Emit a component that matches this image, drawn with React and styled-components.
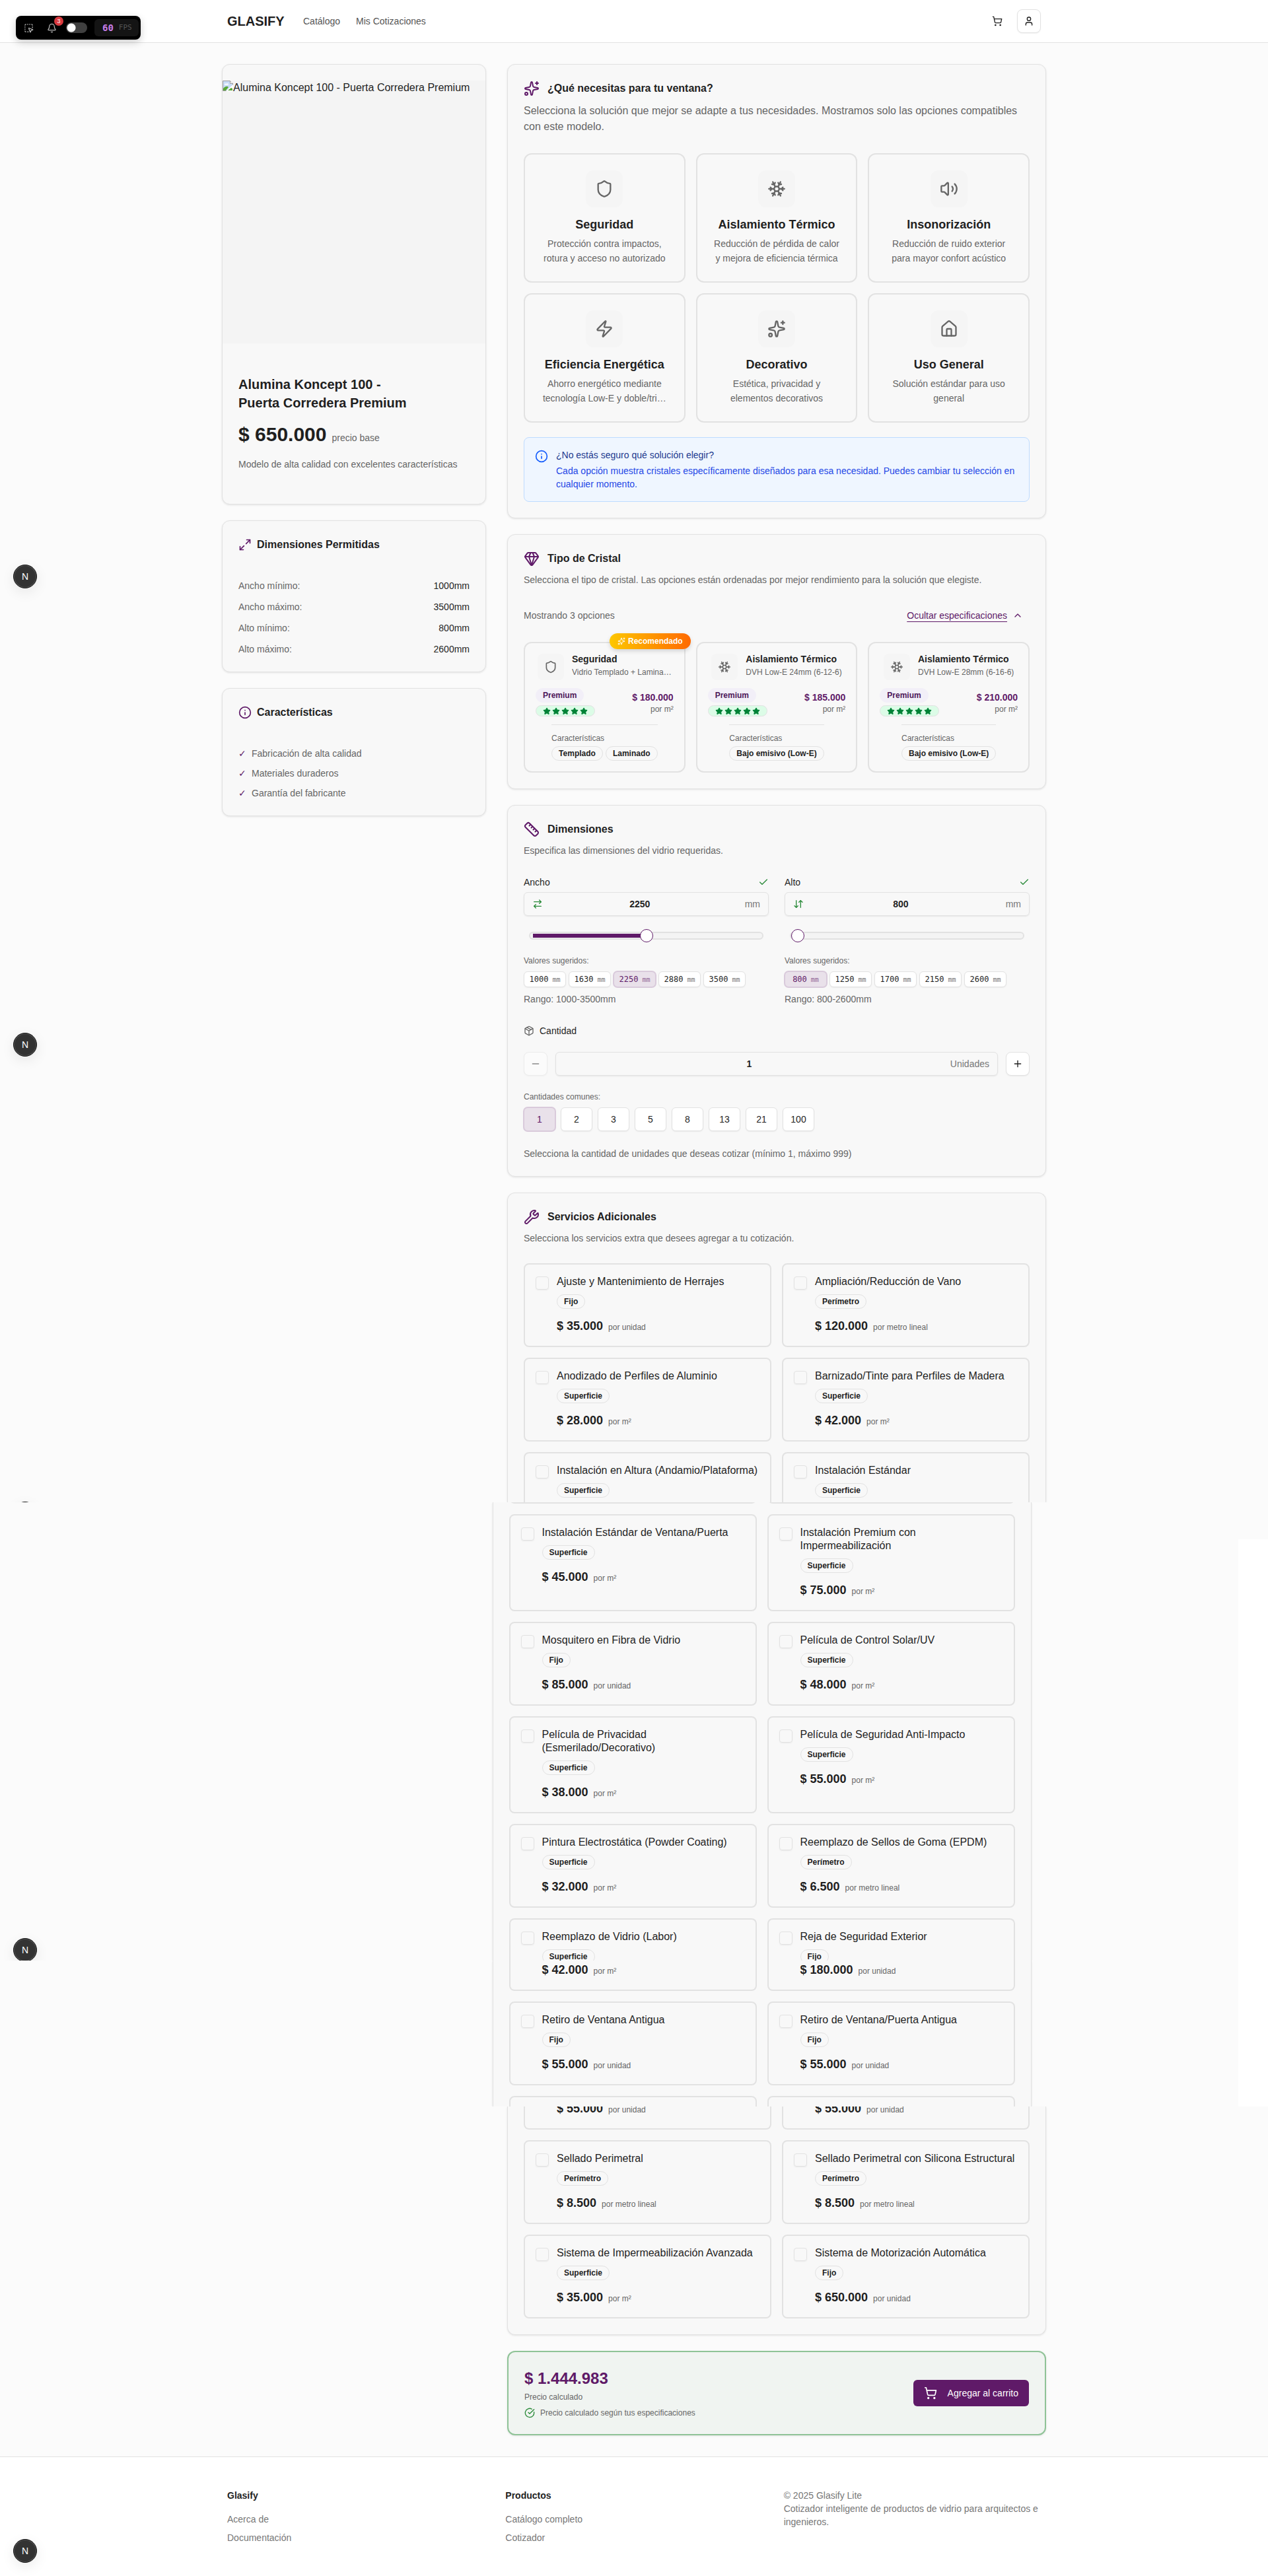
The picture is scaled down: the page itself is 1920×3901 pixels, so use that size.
import React from "react";
import styled, { createGlobalStyle, css } from "styled-components";
import {
  ArrowDownUp, ArrowRightLeft, Bell, Check, ChevronUp, CircleCheckBig, Gem, House, Info,
  Maximize2, Minus, Package, Plus, Ruler, Shield, ShoppingCart, Snowflake, Sparkles,
  SquareDashedMousePointer, Star, User, Volume2, Wrench, Zap,
} from "lucide-react";

const c = {
  page: "#fbfbfb",
  card: "#f8f8f8",
  soft: "#f4f4f4",
  line: "#e2e2e2",
  text: "#1f1f1f",
  muted: "#666666",
  purple: "#5f1a68",
  green: "#2a8a39",
};

const Global = createGlobalStyle`
  *, *::before, *::after { box-sizing: border-box; }
  body {
    margin: 0;
    background: ${c.page};
    color: ${c.text};
    font-family: "Liberation Sans", Arial, sans-serif;
    font-size: 14px;
    line-height: 20px;
  }
  h1, h2, h3, p, ul, dl, dd, fieldset { margin: 0; padding: 0; border: 0; }
  ul { list-style: none; }
  a { color: inherit; text-decoration: none; }
  button, input { font: inherit; color: inherit; }
  svg { display: block; flex: none; }
`;

/* ---------- page shell ---------- */

const Band = styled.section`
  position: relative;
  overflow: hidden;
  background: ${c.page};
`;

const NarrowBand = styled(Band)`
  background: ${(p) => (p.$lead ? `linear-gradient(${c.page} 56px, #ffffff 56px)` : "#ffffff")};
`;

const NarrowInner = styled.div`
  position: relative;
  overflow: hidden;
  margin-right: 45px;
  background: ${c.page};
`;

const Container = styled.div`
  max-width: 1280px;
  margin: 0 auto;
  padding: 0 ${(p) => p.$pad || 16}px;
`;

const Columns = styled.div`
  display: grid;
  grid-template-columns: 400px minmax(0, 1fr);
  gap: 32px;
  padding-top: ${(p) => (p.$top ? 32 : 0)}px;
`;

const Stack = styled.div`
  display: flex;
  flex-direction: column;
  gap: ${(p) => p.$gap || 24}px;
  grid-column: ${(p) => p.$col || "auto"};
  min-width: 0;
`;

const Header = styled.header`
  background: #ffffff;
  border-bottom: 1px solid ${c.line};
`;

const Bar = styled.div`
  display: flex;
  align-items: center;
  height: 64px;
`;

const Brand = styled.a`
  width: 115px;
  font-size: 20px;
  line-height: 28px;
  font-weight: 700;
`;

const Nav = styled.nav`
  display: flex;
  gap: 24px;
  flex: 1;
  color: #555555;
`;

const IconButton = styled.button`
  display: grid;
  place-items: center;
  width: 36px;
  height: 36px;
  margin-left: 12px;
  padding: 0;
  border: 1px solid ${(p) => (p.$outline ? c.line : "transparent")};
  border-radius: 8px;
  background: ${(p) => (p.$outline ? "#ffffff" : "transparent")};
  box-shadow: ${(p) => (p.$outline ? "0 1px 2px rgba(0, 0, 0, 0.06)" : "none")};
  opacity: ${(p) => (p.disabled ? 0.5 : 1)};
`;

/* ---------- floating tools ---------- */

const DevBar = styled.aside`
  position: absolute;
  top: 24px;
  left: 24px;
  z-index: 2;
  display: flex;
  align-items: center;
  height: 36px;
  padding: 0 3px 0 12px;
  border-radius: 8px;
  background: #000000;
  color: #b4b4b4;
  box-shadow: 0 4px 12px rgba(0, 0, 0, 0.2);
`;

const DevButton = styled.button`
  position: relative;
  display: block;
  margin-right: 20px;
  padding: 0;
  border: 0;
  background: none;
`;

const Count = styled.span`
  position: absolute;
  top: -10px;
  left: 11px;
  width: 14px;
  height: 14px;
  border-radius: 50%;
  background: #d93a3f;
  color: #ffffff;
  font-size: 9px;
  line-height: 14px;
  text-align: center;
`;

const Toggle = styled.input`
  appearance: none;
  width: 32px;
  height: 16px;
  margin: 0 11px 0 -6px;
  border-radius: 8px;
  background: radial-gradient(circle at 8px 8px, #ffffff 6px, #404040 7px);
`;

const Fps = styled.span`
  display: flex;
  align-items: center;
  gap: 8px;
  height: 26px;
  padding: 0 10px 0 12px;
  border-radius: 6px;
  background: #141414;
  color: #555555;
  font-family: "DejaVu Sans Mono", monospace;
  font-size: 11px;
  b { color: #c77de8; font-size: 14px; }
`;

const NBadge = styled.button`
  position: absolute;
  left: 20px;
  ${(p) => (p.$bottom !== undefined ? `bottom: ${p.$bottom}px;` : `top: ${p.$top}px;`)}
  width: 36px;
  height: 36px;
  padding: 0;
  border: 1px solid #111111;
  border-radius: 50%;
  background: #333333;
  color: #ffffff;
  font-size: 14px;
  line-height: 34px;
  text-align: center;
  box-shadow: inset 0 0 0 1px #555555, 0 6px 20px rgba(0, 0, 0, 0.08);
`;

const NextBadge = (props) => <NBadge type="button" {...props}>N</NBadge>;

/* ---------- cards ---------- */

const Card = styled.article`
  padding: 24px;
  border: 1px solid ${c.line};
  border-radius: 12px;
  background: ${c.card};
  box-shadow: 0 1px 3px rgba(0, 0, 0, 0.1);
`;

const CardPart = styled(Card)`
  ${(p) => !p.$first && css`
    padding-top: 0;
    border-top: 0;
    border-top-left-radius: 0;
    border-top-right-radius: 0;
  `}
  ${(p) => !p.$last && css`
    padding-bottom: 0;
    border-bottom: 0;
    border-bottom-left-radius: 0;
    border-bottom-right-radius: 0;
  `}
`;

const CardTitle = styled.h2`
  display: flex;
  align-items: center;
  gap: ${(p) => p.$gap || 12}px;
  font-size: 16px;
  line-height: 24px;
  svg { color: ${c.purple}; }
`;

const CardText = styled.p`
  margin-top: 10px;
  color: ${c.muted};
  font-size: ${(p) => (p.$large ? 16 : 14)}px;
  line-height: ${(p) => (p.$large ? 24 : 20)}px;
`;

const CardBody = styled.div`
  margin-top: ${(p) => p.$gap || 28}px;
`;

function CardHead({ icon: Icon, title, text, large }) {
  return (
    <header>
      <CardTitle><Icon size={24} />{title}</CardTitle>
      <CardText $large={large}>{text}</CardText>
    </header>
  );
}

/* ---------- product column ---------- */

const ProductCard = styled(Card)`
  padding: 24px 0;
`;

const Photo = styled.div`
  display: flex;
  align-items: flex-start;
  aspect-ratio: 1;
  background: ${c.soft};
  font-size: 16px;
  line-height: 22px;
  white-space: nowrap;
`;

const ProductInfo = styled.div`
  display: flex;
  flex-direction: column;
  gap: 16px;
  padding: 48px 24px 24px;
`;

const ProductName = styled.h1`
  max-width: 280px;
  font-size: 20px;
  line-height: 28px;
`;

const ProductPrice = styled.p`
  display: flex;
  align-items: baseline;
  gap: 8px;
  color: ${c.muted};
  line-height: 20px;
  strong { color: ${c.text}; font-size: 30px; line-height: 36px; }
`;

const Lead = styled.p`
  color: ${c.muted};
  line-height: 23px;
`;

const Specs = styled.dl`
  display: flex;
  flex-direction: column;
  gap: 12px;
  margin-top: 40px;
  div { display: flex; justify-content: space-between; }
  dt { color: ${c.muted}; }
`;

const Features = styled.ul`
  display: flex;
  flex-direction: column;
  gap: 10px;
  margin-top: 40px;
  color: ${c.muted};
  li { display: flex; gap: 8px; }
  span { width: 12px; color: ${c.purple}; }
`;

function BrokenImage() {
  return (
    <svg width="16" height="16" viewBox="0 0 16 16" aria-hidden="true">
      <path d="M.5.5h11l4 4v11H.5z" fill="#c9dcf7" stroke="#9a9a9a" />
      <path d="M11.5.5v4h4" fill="#fff" stroke="#9a9a9a" />
      <path d="M3 6.5a1.5 1.5 0 0 1 2.500-1.500A2 2 0 0 1 9 6.500z" fill="#fff" />
      <path d="M1 15v-3c3-3.500 6-4 8-2l-4 5z" fill="#5aa83a" />
      <path d="M5 16 16 6v10z" fill="#fff" />
      <path d="M8 15l5-4 2 1v3z" fill="#5aa83a" />
    </svg>
  );
}

/* ---------- solutions ---------- */

const Grid = styled.div`
  display: grid;
  grid-template-columns: repeat(${(p) => p.$cols}, minmax(0, 1fr));
  gap: 16px;
  ${(p) => p.$clip && css`
    height: ${p.$clip}px;
    overflow: hidden;
    align-content: ${p.$end ? "end" : "start"};
  `}
`;

const Solution = styled.button`
  display: flex;
  flex-direction: column;
  align-items: center;
  padding: 24px;
  border: 2px solid ${c.line};
  border-radius: 12px;
  background: transparent;
  text-align: center;
  strong { margin-top: 12px; font-size: 18px; line-height: 28px; white-space: nowrap; }
`;

const SolutionText = styled.span`
  margin-top: 4px;
  color: ${c.muted};
  font-size: 14px;
  line-height: 22px;
`;

const IconBox = styled.span`
  display: grid;
  place-items: center;
  flex: none;
  width: ${(p) => p.$size}px;
  height: ${(p) => p.$size}px;
  border-radius: ${(p) => (p.$size > 40 ? 12 : 8)}px;
  background: #f5f5f5;
  color: ${c.muted};
`;

const Notice = styled.div`
  display: flex;
  gap: 12px;
  margin-top: 22px;
  padding: 16px;
  border: 1px solid #bedbff;
  border-radius: 8px;
  background: #eff6ff;
  color: #1f47e6;
  svg { margin-top: 2px; color: #155dfc; }
  h3 { margin-bottom: 4px; color: #1c398e; font-size: 14px; font-weight: 400; }
`;

/* ---------- glass ---------- */

const Row = styled.div`
  display: flex;
  align-items: center;
  justify-content: ${(p) => (p.$between ? "space-between" : "flex-start")};
  gap: ${(p) => p.$gap || 0}px;
  color: ${(p) => (p.$muted ? c.muted : "inherit")};
`;

const LinkButton = styled.button`
  display: flex;
  align-items: center;
  gap: 8px;
  height: 32px;
  margin-bottom: 24px;
  padding: 0 10px;
  border: 0;
  background: none;
  color: ${c.purple};
  span { text-decoration: underline; text-underline-offset: 4px; }
`;

const Options = styled(Row)`
  > span { margin-bottom: 24px; }
`;

const Glass = styled.button`
  position: relative;
  display: flex;
  flex-direction: column;
  align-items: center;
  gap: 12px;
  padding: 16px;
  border: 2px solid ${c.line};
  border-radius: 12px;
  background: transparent;
  text-align: left;
`;

const GlassHead = styled.span`
  display: flex;
  gap: 12px;
  max-width: 100%;
`;

const GlassName = styled.span`
  display: flex;
  flex-direction: column;
  gap: 4px;
  min-width: 0;
  strong { line-height: 16px; }
`;

const Small = styled.span`
  color: ${c.muted};
  font-size: 12px;
  line-height: 16px;
  overflow: hidden;
  text-overflow: ellipsis;
  white-space: nowrap;
`;

const GlassMeta = styled.span`
  display: flex;
  align-items: center;
  justify-content: space-between;
  width: 100%;
`;

const GlassTags = styled.span`
  display: flex;
  flex-direction: column;
  align-items: flex-start;
  gap: 4px;
`;

const Pill = styled.span`
  display: inline-flex;
  align-items: center;
  gap: 2px;
  height: ${(p) => (p.$tone === "green" ? 17 : 22)}px;
  padding: 0 10px;
  border: 1px solid ${(p) => (p.$tone === "violet" ? "#f2eff8" : c.line)};
  border-radius: 11px;
  background: ${(p) => ({ violet: "#f2eff8", green: "#dcfce7" })[p.$tone] || "transparent"};
  color: ${(p) => ({ violet: "#4d1759", green: "#008236" })[p.$tone] || c.text};
  font-size: 12px;
  line-height: 16px;
  font-weight: 700;
`;

const GlassPrice = styled.span`
  display: flex;
  flex-direction: column;
  align-items: flex-end;
  strong { color: ${c.purple}; }
`;

const GlassSpecs = styled.span`
  display: flex;
  flex-direction: column;
  gap: 4px;
  padding-top: 12px;
  border-top: 1px solid ${c.line};
`;

const Ribbon = styled.span`
  position: absolute;
  top: -15px;
  right: -10px;
  display: flex;
  align-items: center;
  gap: 4px;
  height: 24px;
  padding: 0 12px;
  border-radius: 12px;
  background: linear-gradient(90deg, #fdc700, #ff6900);
  color: #ffffff;
  font-size: 12px;
  font-weight: 700;
  box-shadow: 0 3px 6px rgba(0, 0, 0, 0.15);
`;

/* ---------- dimensions ---------- */

const FieldLabel = styled.label`
  display: flex;
  align-items: center;
  justify-content: ${(p) => (p.$plain ? "flex-start" : "space-between")};
  gap: 8px;
  color: ${c.text};
  svg { color: ${(p) => (p.$plain ? c.muted : c.green)}; }
`;

const InputBox = styled.div`
  display: flex;
  align-items: center;
  flex: 1;
  height: 36px;
  margin-top: ${(p) => (p.$top ? 5 : 0)}px;
  padding: 0 12px 0 ${(p) => (p.$top ? 12 : 0)}px;
  border: 1px solid ${c.line};
  border-radius: 6px;
  box-shadow: 0 1px 2px rgba(0, 0, 0, 0.08);
  color: #777777;
  svg { color: ${c.green}; }
`;

const NumberInput = styled.input`
  flex: 1;
  min-width: 0;
  margin-right: 12px;
  padding: 0;
  border: 0;
  outline: 0;
  background: transparent;
  color: ${c.text};
  font-weight: 700;
  text-align: center;
`;

const Slider = styled.input`
  appearance: none;
  display: block;
  width: calc(100% - 16px);
  height: 20px;
  margin: 20px 8px;
  background: transparent;
  &::-webkit-slider-runnable-track {
    height: 12px;
    border: 2px solid ${c.line};
    border-radius: 6px;
    background: linear-gradient(${c.purple}, ${c.purple}) 4px center / ${(p) => p.$fill}% 6px no-repeat, ${c.soft};
  }
  &::-webkit-slider-thumb {
    appearance: none;
    width: 20px;
    height: 20px;
    margin-top: -6px;
    border: 1px solid ${c.purple};
    border-radius: 50%;
    background: #ffffff;
  }
`;

const Caption = styled.p`
  color: ${c.muted};
  font-size: 12px;
  line-height: 16px;
`;

const Chips = styled.div`
  display: flex;
  flex-wrap: wrap;
  gap: ${(p) => p.$gap}px;
  margin: 8px 0;
`;

const active = css`
  border-color: #d9cadb;
  background: #e9e1ea;
  color: ${c.purple};
  box-shadow: 0 0 0 1px #d9cadb;
`;

const Chip = styled.button`
  display: flex;
  align-items: baseline;
  justify-content: center;
  gap: 6px;
  min-width: 64px;
  height: 24px;
  padding: 3px 7px;
  border: 1px solid ${c.line};
  border-radius: 6px;
  background: #ffffff;
  box-shadow: 0 1px 2px rgba(0, 0, 0, 0.06);
  font-family: "DejaVu Sans Mono", monospace;
  font-size: 12px;
  line-height: 16px;
  small { font-size: 10px; opacity: 0.65; }
  ${(p) => p.$on && active}
`;

const QtyChip = styled.button`
  width: 48px;
  height: 36px;
  padding: 0;
  border: 1px solid ${c.line};
  border-radius: 6px;
  background: #ffffff;
  box-shadow: 0 1px 2px rgba(0, 0, 0, 0.06);
  ${(p) => p.$on && active}
`;

const QtyRow = styled.div`
  display: flex;
  gap: 12px;
  margin: 22px 0 24px;
  button { margin: 0; }
`;

const PairGrid = styled.div`
  display: grid;
  grid-template-columns: 1fr 1fr;
  gap: 24px;
  margin-bottom: 28px;
`;

/* ---------- services ---------- */

const Tile = styled.div`
  display: flex;
  gap: 12px;
  padding: 16px;
  border: 2px solid ${c.line};
  border-radius: 8px;
  ${(p) => p.$open === "top" && css`
    padding-top: 0;
    padding-left: 48px;
    border-top: 0;
    border-top-left-radius: 0;
    border-top-right-radius: 0;
  `}
  ${(p) => p.$open === "bottom" && css`
    padding-bottom: 7px;
    border-bottom: 0;
    border-bottom-left-radius: 0;
    border-bottom-right-radius: 0;
  `}
`;

const TickBox = styled.input`
  appearance: none;
  flex: none;
  width: 20px;
  height: 20px;
  margin: 2px 0 0;
  border: 1px solid ${c.line};
  border-radius: 4px;
  box-shadow: 0 1px 2px rgba(0, 0, 0, 0.06);
`;

const ServiceInfo = styled.div`
  display: flex;
  flex-direction: column;
  align-items: flex-start;
  label { margin-bottom: 9px; font-size: 16px; line-height: 20px; }
`;

const ServicePrice = styled.p`
  display: flex;
  align-items: baseline;
  gap: 8px;
  margin-top: ${(p) => (p.$flush ? 0 : 12)}px;
  strong { font-size: 18px; line-height: 28px; }
  span { color: ${c.muted}; font-size: 12px; line-height: 16px; }
`;

function Price({ value, unit, flush }) {
  return (
    <ServicePrice $flush={flush}>
      <strong>$ {value}</strong>
      <span>{unit}</span>
    </ServicePrice>
  );
}

function Service({ name, kind, value, unit, open }) {
  const id = React.useId();
  return (
    <Tile $open={open}>
      <TickBox type="checkbox" id={id} />
      <ServiceInfo>
        <label htmlFor={id}>{name}</label>
        <Pill>{kind}</Pill>
        {value && <Price value={value} unit={unit} />}
      </ServiceInfo>
    </Tile>
  );
}

const UN = "por unidad";
const M2 = "por m²";
const ML = "por metro lineal";

const toService = ([name, kind, value, unit]) => ({ name, kind, value, unit });

const firstServices = [
  ["Ajuste y Mantenimiento de Herrajes", "Fijo", "35.000", UN],
  ["Ampliación/Reducción de Vano", "Perímetro", "120.000", ML],
  ["Anodizado de Perfiles de Aluminio", "Superficie", "28.000", M2],
  ["Barnizado/Tinte para Perfiles de Madera", "Superficie", "42.000", M2],
].map(toService);

const middleServices = [
  ["Instalación Estándar de Ventana/Puerta", "Superficie", "45.000", M2],
  ["Instalación Premium con Impermeabilización", "Superficie", "75.000", M2],
  ["Mosquitero en Fibra de Vidrio", "Fijo", "85.000", UN],
  ["Película de Control Solar/UV", "Superficie", "48.000", M2],
  ["Película de Privacidad (Esmerilado/Decorativo)", "Superficie", "38.000", M2],
  ["Película de Seguridad Anti-Impacto", "Superficie", "55.000", M2],
  ["Pintura Electrostática (Powder Coating)", "Superficie", "32.000", M2],
  ["Reemplazo de Sellos de Goma (EPDM)", "Perímetro", "6.500", ML],
].map(toService);

const removalServices = [
  ["Retiro de Ventana Antigua", "Fijo", "55.000", UN],
  ["Retiro de Ventana/Puerta Antigua", "Fijo", "55.000", UN],
].map(toService);

const lastServices = [
  ["Sellado Perimetral", "Perímetro", "8.500", ML],
  ["Sellado Perimetral con Silicona Estructural", "Perímetro", "8.500", ML],
  ["Sistema de Impermeabilización Avanzada", "Superficie", "35.000", M2],
  ["Sistema de Motorización Automática", "Fijo", "650.000", UN],
].map(toService);

const ServiceGrid = ({ items }) => (
  <Grid $cols={2}>{items.map((s) => <Service key={s.name} {...s} />)}</Grid>
);

/* ---------- total and footer ---------- */

const Total = styled(Card)`
  display: flex;
  align-items: center;
  justify-content: space-between;
  border: 2px solid #8fc397;
  background: #f0f4f1;
  color: ${c.muted};
  font-size: 12px;
  line-height: 16px;
`;

const Amount = styled.strong`
  display: block;
  margin-bottom: 4px;
  color: ${c.purple};
  font-size: 24px;
  line-height: 32px;
`;

const Confirm = styled(Row)`
  margin-top: 8px;
  svg { color: ${c.green}; }
`;

const CartButton = styled.button`
  display: flex;
  align-items: center;
  gap: 16px;
  height: 40px;
  padding: 0 16px;
  border: 0;
  border-radius: 6px;
  background: ${c.purple};
  color: #ffffff;
  font-size: 14px;
`;

const Footer = styled.footer`
  position: relative;
  margin-top: 32px;
  border-top: 1px solid ${c.line};
  background: #ffffff;
  color: #777777;
`;

const FooterGrid = styled.div`
  display: grid;
  grid-template-columns: repeat(3, minmax(0, 1fr));
  gap: 32px;
  padding: 48px 0;
  h3 { margin-bottom: 16px; color: ${c.text}; font-size: 14px; }
  li + li { margin-top: 8px; }
`;

/* ---------- data ---------- */

const solutions = [
  [Shield, "Seguridad", "Protección contra impactos, rotura y acceso no autorizado"],
  [Snowflake, "Aislamiento Térmico", "Reducción de pérdida de calor y mejora de eficiencia térmica"],
  [Volume2, "Insonorización", "Reducción de ruido exterior para mayor confort acústico"],
  [Zap, "Eficiencia Energética", "Ahorro energético mediante tecnología Low-E y doble/tri…"],
  [Sparkles, "Decorativo", "Estética, privacidad y elementos decorativos"],
  [House, "Uso General", "Solución estándar para uso general"],
];

const glasses = [
  { icon: Shield, name: "Seguridad", detail: "Vidrio Templado + Lamina…", price: "180.000", tags: ["Templado", "Laminado"], best: true },
  { icon: Snowflake, name: "Aislamiento Térmico", detail: "DVH Low-E 24mm (6-12-6)", price: "185.000", tags: ["Bajo emisivo (Low-E)"] },
  { icon: Snowflake, name: "Aislamiento Térmico", detail: "DVH Low-E 28mm (6-16-6)", price: "210.000", tags: ["Bajo emisivo (Low-E)"] },
];

function Dimension({ label, icon: Icon, value, min, max, fill, presets }) {
  const id = React.useId();
  return (
    <div>
      <FieldLabel htmlFor={id}>{label}<Check size={16} /></FieldLabel>
      <InputBox $top>
        <Icon size={16} />
        <NumberInput id={id} defaultValue={value} inputMode="numeric" />
        <span>mm</span>
      </InputBox>
      <Slider type="range" aria-label={label} min={min} max={max} defaultValue={value} $fill={fill} />
      <Caption>Valores sugeridos:</Caption>
      <Chips $gap={4}>
        {presets.map((n) => (
          <Chip type="button" key={n} $on={n === value}>{n}<small>mm</small></Chip>
        ))}
      </Chips>
      <Row $muted>Rango: {min}-{max}mm</Row>
    </div>
  );
}

export default function App() {
  return (
    <>
      <Global />
      <Band>
        <DevBar>
          <DevButton type="button" aria-label="Inspeccionar"><SquareDashedMousePointer size={15} strokeWidth={2} /></DevButton>
          <DevButton type="button" aria-label="Notificaciones">
            <Bell size={15} strokeWidth={2} />
            <Count>3</Count>
          </DevButton>
          <Toggle type="checkbox" aria-label="Activar" />
          <Fps><b>60</b>FPS</Fps>
        </DevBar>
        <Header>
          <Container $pad={24}>
            <Bar>
              <Brand href="#">GLASIFY</Brand>
              <Nav>
                <a href="#catalogo">Catálogo</a>
                <a href="#cotizaciones">Mis Cotizaciones</a>
              </Nav>
              <IconButton type="button" aria-label="Carrito"><ShoppingCart size={16} /></IconButton>
              <IconButton type="button" aria-label="Cuenta" $outline><User size={16} /></IconButton>
            </Bar>
          </Container>
        </Header>

        <Container>
          <Columns $top>
            <Stack>
              <ProductCard>
                <Photo><BrokenImage />Alumina Koncept 100 - Puerta Corredera Premium</Photo>
                <ProductInfo>
                  <ProductName>Alumina Koncept 100 - Puerta Corredera Premium</ProductName>
                  <ProductPrice><strong>$ 650.000</strong>precio base</ProductPrice>
                  <Lead>Modelo de alta calidad con excelentes características</Lead>
                </ProductInfo>
              </ProductCard>

              <Card>
                <CardTitle $gap={8}><Maximize2 size={20} />Dimensiones Permitidas</CardTitle>
                <Specs>
                  <div><dt>Ancho mínimo:</dt><dd>1000mm</dd></div>
                  <div><dt>Ancho máximo:</dt><dd>3500mm</dd></div>
                  <div><dt>Alto mínimo:</dt><dd>800mm</dd></div>
                  <div><dt>Alto máximo:</dt><dd>2600mm</dd></div>
                </Specs>
              </Card>

              <Card>
                <CardTitle $gap={8}><Info size={20} />Características</CardTitle>
                <Features>
                  <li><span>✓</span>Fabricación de alta calidad</li>
                  <li><span>✓</span>Materiales duraderos</li>
                  <li><span>✓</span>Garantía del fabricante</li>
                </Features>
              </Card>
            </Stack>

            <Stack>
              <Card>
                <CardHead
                  icon={Sparkles}
                  title="¿Qué necesitas para tu ventana?"
                  text="Selecciona la solución que mejor se adapte a tus necesidades. Mostramos solo las opciones compatibles con este modelo."
                  large
                />
                <CardBody>
                  <Grid $cols={3}>
                    {solutions.map(([Icon, name, text]) => (
                      <Solution type="button" key={name}>
                        <IconBox $size={56}><Icon size={28} /></IconBox>
                        <strong>{name}</strong>
                        <SolutionText>{text}</SolutionText>
                      </Solution>
                    ))}
                  </Grid>
                  <Notice>
                    <Info size={20} />
                    <div>
                      <h3>¿No estás seguro qué solución elegir?</h3>
                      <p>Cada opción muestra cristales específicamente diseñados para esa necesidad. Puedes cambiar tu selección en cualquier momento.</p>
                    </div>
                  </Notice>
                </CardBody>
              </Card>

              <Card>
                <CardHead
                  icon={Gem}
                  title="Tipo de Cristal"
                  text="Selecciona el tipo de cristal. Las opciones están ordenadas por mejor rendimiento para la solución que elegiste."
                />
                <CardBody>
                  <Options $between $muted>
                    <span>Mostrando 3 opciones</span>
                    <LinkButton type="button"><span>Ocultar especificaciones</span><ChevronUp size={16} /></LinkButton>
                  </Options>
                  <Grid $cols={3}>
                    {glasses.map(({ icon: Icon, name, detail, price, tags, best }) => (
                      <Glass type="button" key={detail}>
                        {best && <Ribbon><Sparkles size={12} />Recomendado</Ribbon>}
                        <GlassHead>
                          <IconBox $size={40}><Icon size={20} /></IconBox>
                          <GlassName><strong>{name}</strong><Small>{detail}</Small></GlassName>
                        </GlassHead>
                        <GlassMeta>
                          <GlassTags>
                            <Pill $tone="violet">Premium</Pill>
                            <Pill $tone="green">
                              {[1, 2, 3, 4, 5].map((n) => <Star key={n} size={12} fill="currentColor" />)}
                            </Pill>
                          </GlassTags>
                          <GlassPrice><strong>$ {price}</strong><Small>por m²</Small></GlassPrice>
                        </GlassMeta>
                        <GlassSpecs>
                          <Small>Características</Small>
                          <Row as="span" $gap={4}>{tags.map((t) => <Pill key={t}>{t}</Pill>)}</Row>
                        </GlassSpecs>
                      </Glass>
                    ))}
                  </Grid>
                </CardBody>
              </Card>

              <Card>
                <CardHead icon={Ruler} title="Dimensiones" text="Especifica las dimensiones del vidrio requeridas." />
                <CardBody>
                  <PairGrid>
                    <Dimension label="Ancho" icon={ArrowRightLeft} value={2250} min={1000} max={3500} fill={50} presets={[1000, 1630, 2250, 2880, 3500]} />
                    <Dimension label="Alto" icon={ArrowDownUp} value={800} min={800} max={2600} fill={0} presets={[800, 1250, 1700, 2150, 2600]} />
                  </PairGrid>
                  <FieldLabel $plain htmlFor="cantidad"><Package size={16} />Cantidad</FieldLabel>
                  <QtyRow>
                    <IconButton type="button" $outline disabled aria-label="Menos"><Minus size={16} /></IconButton>
                    <InputBox>
                      <NumberInput id="cantidad" defaultValue="1" inputMode="numeric" />
                      <span>Unidades</span>
                    </InputBox>
                    <IconButton type="button" $outline aria-label="Más"><Plus size={16} /></IconButton>
                  </QtyRow>
                  <Caption>Cantidades comunes:</Caption>
                  <Chips $gap={8}>
                    {[1, 2, 3, 5, 8, 13, 21, 100].map((n) => (
                      <QtyChip type="button" key={n} $on={n === 1}>{n}</QtyChip>
                    ))}
                  </Chips>
                  <CardBody as="p" $gap={24}>
                    <Row as="span" $muted>Selecciona la cantidad de unidades que deseas cotizar (mínimo 1, máximo 999)</Row>
                  </CardBody>
                </CardBody>
              </Card>

              <CardPart $first>
                <CardHead icon={Wrench} title="Servicios Adicionales" text="Selecciona los servicios extra que desees agregar a tu cotización." />
                <CardBody>
                  <Stack $gap={16}>
                    <ServiceGrid items={firstServices} />
                    <Grid $cols={2}>
                      <Service open="bottom" name="Instalación en Altura (Andamio/Plataforma)" kind="Superficie" />
                      <Service open="bottom" name="Instalación Estándar" kind="Superficie" />
                    </Grid>
                  </Stack>
                </CardBody>
              </CardPart>
            </Stack>
          </Columns>
        </Container>
        <NextBadge $top={855} />
        <NextBadge $top={1564} />
        <NBadge type="button" aria-label="N" $bottom={-35} />
      </Band>

      <NarrowBand $lead>
        <NarrowInner>
          <Container>
            <Columns>
              <Stack $col="2">
                <CardPart>
                  <Stack $gap={16}>
                    <Grid $cols={2} $clip={2} $end><Tile /><Tile /></Grid>
                    <ServiceGrid items={middleServices} />
                    <Grid $cols={2} $clip={64}>
                      <Service name="Reemplazo de Vidrio (Labor)" kind="Superficie" open="bottom" />
                      <Service name="Reja de Seguridad Exterior" kind="Fijo" open="bottom" />
                    </Grid>
                  </Stack>
                </CardPart>
              </Stack>
            </Columns>
          </Container>
          <NextBadge $bottom={-2} />
        </NarrowInner>
      </NarrowBand>

      <NarrowBand>
        <NarrowInner>
          <Container>
            <Columns>
              <Stack $col="2">
                <CardPart>
                  <Stack $gap={16}>
                    <Grid $cols={2}>
                      <Tile $open="top"><Price flush value="42.000" unit={M2} /></Tile>
                      <Tile $open="top"><Price flush value="180.000" unit={UN} /></Tile>
                    </Grid>
                    <ServiceGrid items={removalServices} />
                    <Grid $cols={2} $clip={16}><Tile /><Tile /></Grid>
                  </Stack>
                </CardPart>
              </Stack>
            </Columns>
          </Container>
        </NarrowInner>
      </NarrowBand>

      <Band>
        <Container>
          <Columns>
            <Stack $col="2">
              <CardPart $last>
                <Stack $gap={16}>
                  <Grid $cols={2} $clip={35} $end>
                    <Tile $open="top"><Price flush value="55.000" unit={UN} /></Tile>
                    <Tile $open="top"><Price flush value="55.000" unit={UN} /></Tile>
                  </Grid>
                  <ServiceGrid items={lastServices} />
                </Stack>
              </CardPart>
              <Total>
                <div>
                  <Amount>$ 1.444.983</Amount>
                  <p>Precio calculado</p>
                  <Confirm $gap={8}><CircleCheckBig size={16} />Precio calculado según tus especificaciones</Confirm>
                </div>
                <CartButton type="button"><ShoppingCart size={20} />Agregar al carrito</CartButton>
              </Total>
            </Stack>
          </Columns>
        </Container>
        <Footer>
          <Container $pad={24}>
            <FooterGrid>
              <div>
                <h3>Glasify</h3>
                <ul>
                  <li><a href="#acerca">Acerca de</a></li>
                  <li><a href="#documentacion">Documentación</a></li>
                </ul>
              </div>
              <div>
                <h3>Productos</h3>
                <ul>
                  <li><a href="#completo">Catálogo completo</a></li>
                  <li><a href="#cotizador">Cotizador</a></li>
                </ul>
              </div>
              <div>
                <p>© 2025 Glasify Lite</p>
                <p>Cotizador inteligente de productos de vidrio para arquitectos e ingenieros.</p>
              </div>
            </FooterGrid>
          </Container>
          <NextBadge $bottom={20} />
        </Footer>
      </Band>
    </>
  );
}
